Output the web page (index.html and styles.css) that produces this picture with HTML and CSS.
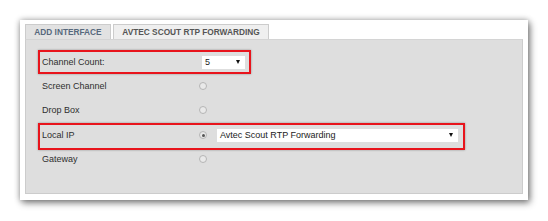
FILE: index.html
```html
<!DOCTYPE html>
<html>
<head>
<meta charset="utf-8">
<link rel="stylesheet" href="styles.css">
</head>
<body>
<div class="page">
  <div class="card">
    <div class="tabs">
      <div class="tab tab-active">ADD INTERFACE</div>
      <div class="tab tab-other">AVTEC SCOUT RTP FORWARDING</div>
    </div>
    <div class="panel">
      <div class="row row-hl row-first">
        <div class="label">Channel Count:</div>
        <div class="select select-small"><span>5</span><i class="arrow"></i></div>
      </div>
      <div class="row">
        <div class="label">Screen Channel</div>
        <span class="radio"></span>
      </div>
      <div class="row">
        <div class="label">Drop Box</div>
        <span class="radio"></span>
      </div>
      <div class="row row-hl row-ip">
        <div class="label">Local IP</div>
        <span class="radio radio-on"></span>
        <div class="select select-wide"><span>Avtec Scout RTP Forwarding</span><i class="arrow"></i></div>
      </div>
      <div class="row row-last">
        <div class="label">Gateway</div>
        <span class="radio"></span>
      </div>
    </div>
  </div>
</div>
</body>
</html>
```
FILE: styles.css
```css
html, body {
  margin: 0;
  padding: 0;
  background: #ffffff;
}
body {
  width: 548px;
  height: 221px;
  overflow: hidden;
  font-family: "Liberation Sans", Arial, sans-serif;
}
.page {
  padding: 20px 0 0 20px;
}
.card {
  width: 508px;
  height: 180px;
  box-sizing: border-box;
  background: #ffffff;
  padding: 4px 5px 6px 5px;
  box-shadow: 2px 3px 7px rgba(0, 0, 0, 0.45), 0 0 6px rgba(0, 0, 0, 0.3);
  display: flex;
  flex-direction: column;
}
.tabs {
  display: flex;
  gap: 2px;
  height: 15px;
}
.tab {
  box-sizing: border-box;
  height: 15px;
  border: 1px solid #cccccc;
  border-bottom: none;
  font-weight: bold;
  font-size: 8.3px;
  line-height: 14px;
  text-align: center;
}
.tab-active {
  width: 86px;
  background: #e2e2e2;
  color: #56687c;
}
.tab-other {
  width: 156px;
  background: #efefef;
  color: #555555;
}
.panel {
  flex: 1;
  width: 498px;
  box-sizing: border-box;
  background: #dedede;
  border: 1px solid #cccccc;
  border-top-color: #d4d4d4;
  padding: 10px 0 0 12px;
  display: flex;
  flex-direction: column;
  align-items: flex-start;
}
.row {
  box-sizing: border-box;
  height: 24px;
  display: flex;
  align-items: center;
  border: 2px solid transparent;
  padding-left: 2px;
  font-size: 9px;
  color: #2e2e2e;
}
.row-hl {
  border-color: #e8141c;
  box-shadow: 0 0 2px rgba(0, 0, 0, 0.35);
}
.row-first {
  padding-right: 4px;
}
.row-ip {
  height: 27px;
  margin-top: 1px;
  padding-bottom: 3px;
  padding-right: 5px;
}
.row-last {
  padding-bottom: 6px;
}
.label {
  width: 157px;
}
.radio {
  box-sizing: border-box;
  width: 8px;
  height: 8px;
  border-radius: 50%;
  border: 1px solid #b5b5b5;
  background: #e9e9e9;
  display: flex;
  align-items: center;
  justify-content: center;
}
.radio-on::after {
  content: "";
  width: 3px;
  height: 3px;
  border-radius: 50%;
  background: #555555;
}
.select {
  box-sizing: border-box;
  height: 13px;
  background: #ffffff;
  display: flex;
  align-items: center;
  justify-content: space-between;
  padding: 0 5px 0 3px;
  font-size: 9px;
  color: #222222;
}
.select-small {
  width: 43px;
  margin-left: 3px;
}
.select-wide {
  width: 241px;
  margin-left: 10px;
}
.arrow {
  width: 0;
  height: 0;
  border-left: 2.5px solid transparent;
  border-right: 2.5px solid transparent;
  border-top: 4px solid #111111;
}
```
